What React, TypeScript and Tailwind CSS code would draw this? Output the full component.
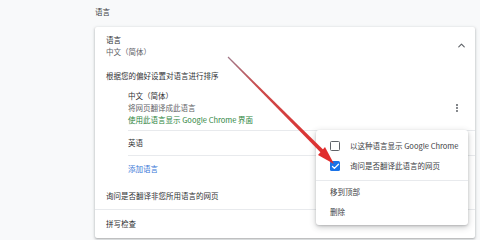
import { ChevronUp, MoreVertical, Check } from 'lucide-react'

const font = { fontFamily: '"Noto Sans CJK SC", "Noto Sans", sans-serif' }

function MenuCheck({ checked, label }: { checked?: boolean; label: string }) {
  return (
    <div className="flex items-center h-[20px] pl-[14px] gap-[10px]">
      {checked ? (
        <span className="w-[10px] h-[10px] rounded-[1.5px] bg-[#1a73e8] flex items-center justify-center">
          <Check className="w-[9px] h-[9px] text-white" strokeWidth={3.5} />
        </span>
      ) : (
        <span className="w-[10px] h-[10px] rounded-[1.5px] border-[1.5px] border-[#5f6368]" />
      )}
      <span className="text-[#3c4043]">{label}</span>
    </div>
  )
}

export default function App() {
  return (
    <div
      className="relative w-[480px] h-[240px] overflow-hidden bg-[#f8f9fa] text-[7.5px] leading-[12px] text-[#303134]"
      style={font}
    >
      <div className="pl-[95px] pr-[5px]">
        <div className="h-[27px] pt-[6px] text-[#3c4043]">语言</div>

        <div className="h-[211px] bg-white rounded-[2px] shadow-[0_1px_2px_rgba(60,64,67,0.3),0_1px_3px_1px_rgba(60,64,67,0.12)]">
          {/* language section */}
          <div className="flex pl-[11px] pr-[8px] pt-[7px]">
            <div className="flex-1">
              <div>语言</div>
              <div className="text-[#5f6368]">中文（简体）</div>
            </div>
            <ChevronUp className="w-[11px] h-[11px] mt-[6px] text-[#5f6368]" strokeWidth={2.5} />
          </div>

          <div className="pl-[11px] mt-[12px]">根据您的偏好设置对语言进行排序</div>

          <div className="ml-[33px] mt-[8px]">
            <div className="flex items-center pr-[13px]">
              <div className="flex-1">
                <div>中文（简体）</div>
                <div className="text-[#5f6368]">将网页翻译成此语言</div>
                <div className="text-[#2e8540]">使用此语言显示 Google Chrome 界面</div>
              </div>
              <MoreVertical className="w-[10px] h-[10px] text-[#5f6368]" strokeWidth={3} />
            </div>
            <div className="h-px bg-[#e8eaed] mt-[4px]" />
            <div className="h-[24px] flex items-center">英语</div>
            <div className="h-px bg-[#e8eaed]" />
            <div className="h-[26px] flex items-center text-[#3b78d8]">添加语言</div>
          </div>

          <div className="h-[26px] flex items-center pl-[11px] mt-[1px]">询问是否翻译非您所用语言的网页</div>
          <div className="h-px bg-[#e8eaed]" />
          <div className="h-[28px] flex items-center pl-[11px]">拼写检查</div>
        </div>
      </div>

      {/* context menu */}
      <div className="absolute left-[316px] top-[130px] w-[152px] h-[95px] bg-white rounded-[3px] pt-[6px] shadow-[0_2px_6px_rgba(60,64,67,0.3),0_1px_2px_rgba(60,64,67,0.2)]">
        <MenuCheck label="以这种语言显示 Google Chrome" />
        <MenuCheck checked label="询问是否翻译此语言的网页" />
        <div className="h-px bg-[#e8eaed] mt-[4px]" />
        <div className="h-[20px] flex items-center pl-[14px] mt-[1px] text-[#3c4043]">移到顶部</div>
        <div className="h-[20px] flex items-center pl-[14px] text-[#3c4043]">删除</div>
      </div>

      {/* annotation arrow, tapered: thin at the start, thicker near the head */}
      <svg className="absolute left-0 top-0" width="480" height="240" viewBox="0 0 480 240">
        <defs>
          <linearGradient id="arrowGrad" x1="228" y1="57" x2="330" y2="160" gradientUnits="userSpaceOnUse">
            <stop offset="0" stopColor="#a07888" />
            <stop offset="0.3" stopColor="#cc4a4a" />
            <stop offset="1" stopColor="#e02c2c" />
          </linearGradient>
        </defs>
        <polygon points="228.4,56.6 227.6,57.4 323.6,155.6 326.4,152.8" fill="url(#arrowGrad)" />
        <polygon points="334,164 318,155 325,147" fill="#e02c2c" />
      </svg>
    </div>
  )
}
